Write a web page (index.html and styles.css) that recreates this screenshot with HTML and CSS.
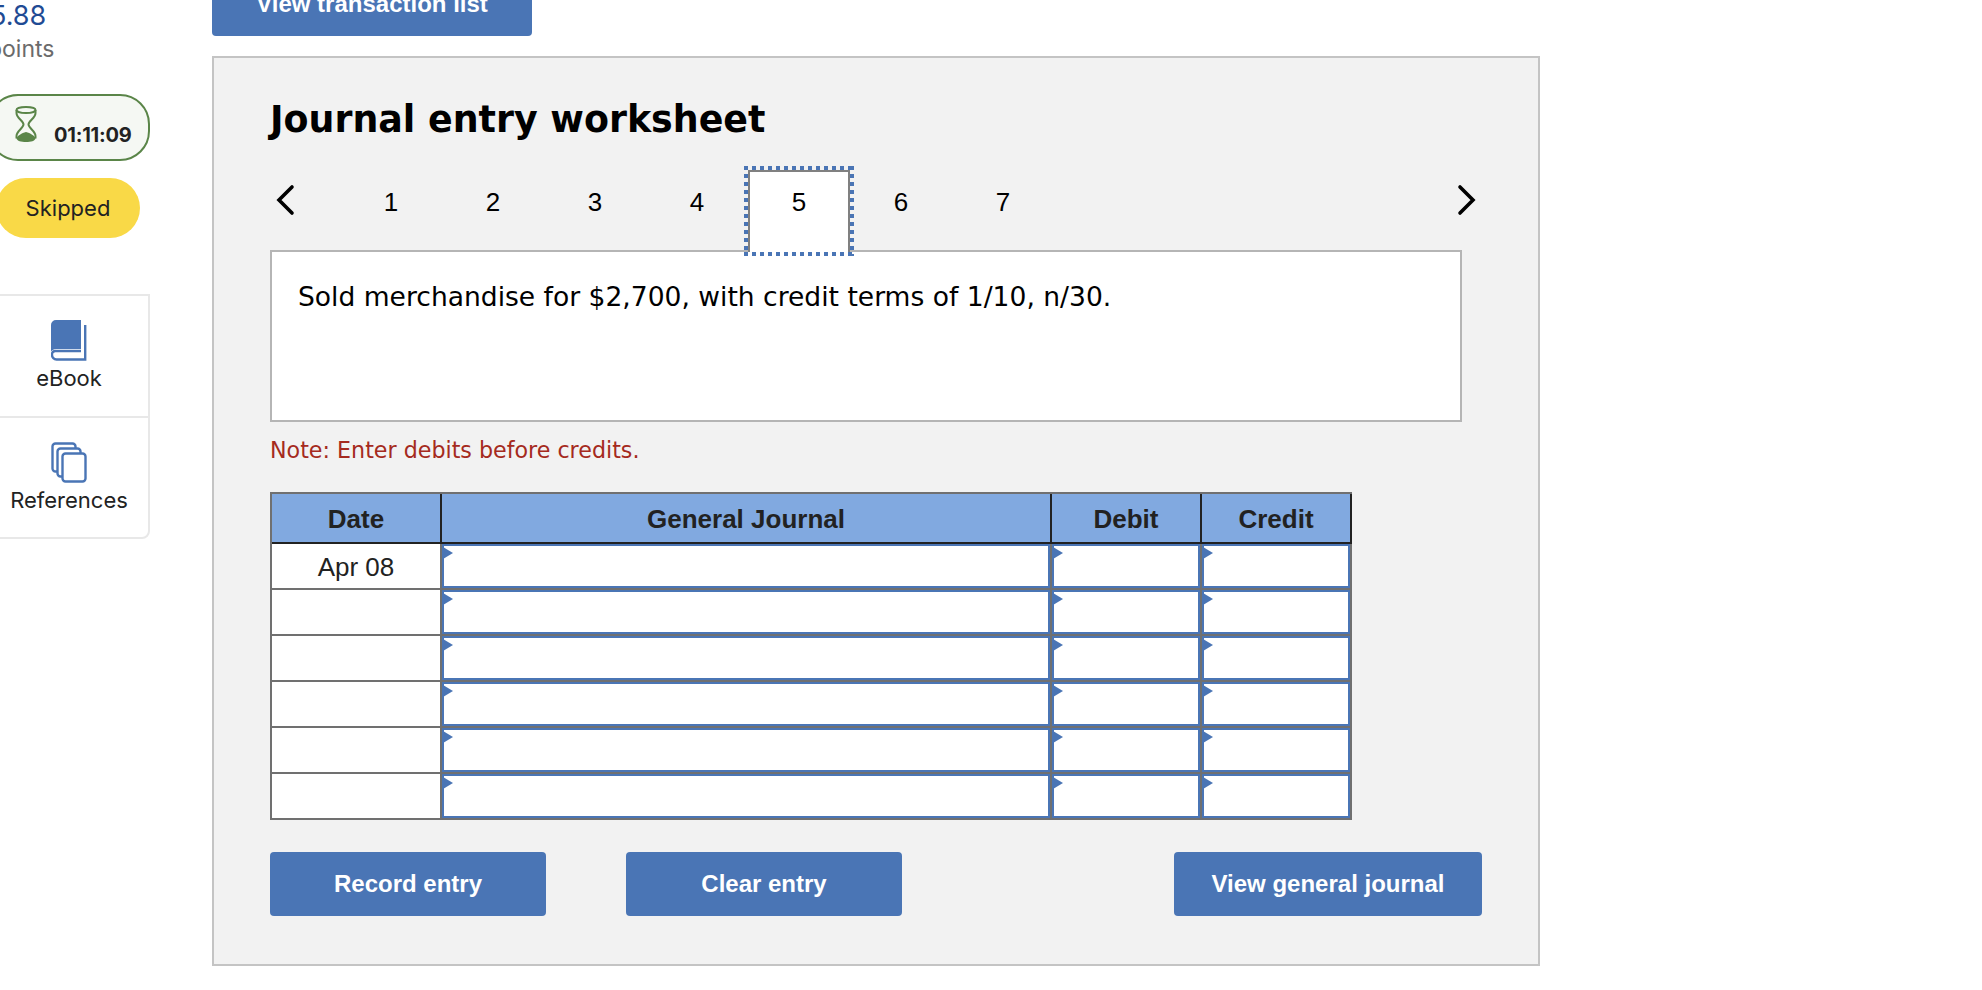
FILE: index.html
```html
<!DOCTYPE html>
<html lang="en">
<head>
<meta charset="utf-8">
<title>Journal entry worksheet</title>
<link rel="stylesheet" href="styles.css">
</head>
<body>
<div class="page">
  <aside class="sidebar">
    <div class="score">5.88</div>
    <div class="points">points</div>
    <div class="timer">
      <svg class="hourglass" width="22" height="37" viewBox="0 0 22 37">
        <ellipse cx="11" cy="4" rx="9.500" ry="3" fill="none" stroke="#5a8548" stroke-width="2"/>
        <path d="M1.500 4V7C1.500 12 8.500 15 8.500 18.500C8.500 22 1.500 25 1.500 30V32.500M20.500 4V7C20.500 12 13.500 15 13.500 18.500C13.500 22 20.500 25 20.500 30V32.500" fill="none" stroke="#5a8548" stroke-width="2"/>
        <path d="M11 26C7 27 2 30 1.500 32.500C2 35 6 36 11 36C16 36 20 35 20.500 32.500C20 30 15 27 11 26Z" fill="#5a8548"/>
      </svg>
      <span class="timer-text">01:11:09</span>
    </div>
    <div class="status">Skipped</div>
    <div class="tools">
      <div class="tool tool-first">
        <svg class="tool-icon" width="36" height="41" viewBox="0 0 36 41">
          <path d="M5 0H30V29H5C2.800 29 1.200 30 0 31.500V5A5 5 0 0 1 5 0Z" fill="#4a75b5"/>
          <path d="M34.200 5V39.500H5.500A4.500 4.500 0 0 1 1 35V33.500A3.500 3.500 0 0 1 4.500 31H30" fill="none" stroke="#4a75b5" stroke-width="2.400"/>
        </svg>
        <span class="tool-label">eBook</span>
      </div>
      <div class="tool">
        <svg class="tool-icon" width="36" height="41" viewBox="0 0 36 41">
          <rect x="1.500" y="1.500" width="23" height="28" rx="3" fill="#fff" stroke="#4a75b5" stroke-width="2.400"/>
          <rect x="6.500" y="6.500" width="23" height="28" rx="3" fill="#fff" stroke="#4a75b5" stroke-width="2.400"/>
          <rect x="11.500" y="11.500" width="23" height="28" rx="3" fill="#fff" stroke="#4a75b5" stroke-width="2.400"/>
        </svg>
        <span class="tool-label">References</span>
      </div>
    </div>
  </aside>

  <main class="main">
    <button class="btn btn-top">View transaction list</button>
    <section class="panel">
      <h1 class="title">Journal entry worksheet</h1>
      <nav class="steps">
        <svg class="chev chev-left" width="22" height="32" viewBox="0 0 22 32">
          <path d="M18 3L5 16L18 29" fill="none" stroke="#000" stroke-width="3.600" stroke-linecap="round" stroke-linejoin="miter"/>
        </svg>
        <div class="tabs">
          <span class="tab">1</span>
          <span class="tab">2</span>
          <span class="tab">3</span>
          <span class="tab">4</span>
          <span class="tab tab-active">5</span>
          <span class="tab">6</span>
          <span class="tab">7</span>
        </div>
        <svg class="chev chev-right" width="22" height="32" viewBox="0 0 22 32">
          <path d="M4 3L17 16L4 29" fill="none" stroke="#000" stroke-width="3.600" stroke-linecap="round" stroke-linejoin="miter"/>
        </svg>
      </nav>
      <div class="desc">Sold merchandise for $2,700, with credit terms of 1/10, n/30.</div>
      <p class="note">Note: Enter debits before credits.</p>
      <table class="journal">
        <thead>
          <tr>
            <th class="col-date">Date</th>
            <th class="col-account">General Journal</th>
            <th class="col-amount">Debit</th>
            <th class="col-amount">Credit</th>
          </tr>
        </thead>
        <tbody>
          <tr><td class="date">Apr 08</td><td><div class="field"></div></td><td><div class="field"></div></td><td><div class="field"></div></td></tr>
          <tr><td class="date"></td><td><div class="field"></div></td><td><div class="field"></div></td><td><div class="field"></div></td></tr>
          <tr><td class="date"></td><td><div class="field"></div></td><td><div class="field"></div></td><td><div class="field"></div></td></tr>
          <tr><td class="date"></td><td><div class="field"></div></td><td><div class="field"></div></td><td><div class="field"></div></td></tr>
          <tr><td class="date"></td><td><div class="field"></div></td><td><div class="field"></div></td><td><div class="field"></div></td></tr>
          <tr><td class="date"></td><td><div class="field"></div></td><td><div class="field"></div></td><td><div class="field"></div></td></tr>
        </tbody>
      </table>
      <div class="actions">
        <button class="btn btn-record">Record entry</button>
        <button class="btn btn-clear">Clear entry</button>
        <button class="btn btn-view">View general journal</button>
      </div>
    </section>
  </main>
</div>
</body>
</html>
```
FILE: styles.css
```css
* { box-sizing: border-box; }
html, body { margin: 0; padding: 0; background: #fff; }
body { height: 990px; overflow: hidden; font-family: "Liberation Sans", Arial, sans-serif; color: #000; }
.page { display: flex; align-items: flex-start; }

.sidebar { width: 162px; margin-left: -12px; flex: none; font-family: Inter, Lato, sans-serif; }
.score { font-size: 27px; line-height: 32px; color: #1f4b94; padding-left: 2px; }
.points { font-size: 23px; line-height: 30px; margin-top: 2px; color: #6b6b6b; padding-left: 0; }
.timer { height: 67px; margin-top: 30px; border: 2px solid #5a8548; border-radius: 30px; background: #f5f8f3; display: flex; align-items: flex-start; padding: 10px 0 0 25px; }
.hourglass { flex: none; }
.timer-text { font-size: 20px; font-weight: 700; line-height: 24px; letter-spacing: -0.2px; color: #222; margin: 17px 0 0 17px; }
.status { width: 144px; height: 60px; margin: 17px 0 0 8px; border-radius: 30px; background: #f9d947; color: #222; font-size: 22px; line-height: 60px; text-align: center; }
.tools { margin-top: 56px; width: 162px; height: 245px; border: 2px solid #e8e8e8; border-radius: 0 0 8px 0; display: flex; flex-direction: column; }
.tool { height: 121px; display: flex; flex-direction: column; align-items: center; padding-top: 24px; }
.tool-first { height: 123px; border-bottom: 2px solid #e8e8e8; }
.tool-icon { display: block; flex: none; }
.tool-label { font-size: 22px; line-height: 26px; color: #222; margin-top: 4px; }

.main { width: 1328px; margin-left: 62px; margin-top: -28px; flex: none; }
.btn { display: block; border: 0; border-radius: 4px; background: #4a75b5; color: #fff; font: 700 24px/1 "Liberation Sans", Arial, sans-serif; height: 64px; padding: 0; text-align: center; }
.btn-top { width: 320px; }
.panel { margin-top: 20px; height: 910px; background: #f2f2f2; border: 2px solid #c4c4c4; padding: 0 56px; }
.title { margin: 40px 0 0; font: 700 36.400px/44px "DejaVu Sans", Verdana, sans-serif; color: #000; }
.steps { display: flex; align-items: flex-start; height: 86px; margin-top: 28px; width: 1212px; position: relative; }
.chev { flex: none; margin-top: 14px; }
.chev-left { margin-left: 4px; }
.chev-right { margin-left: auto; margin-right: 4px; }
.tabs { display: flex; margin-left: 44px; }
.tab { width: 102px; height: 82px; padding-top: 17px; font-size: 26px; line-height: 30px; text-align: center; color: #000; position: relative; }
.tab-active { background: #fff; border: 2px solid #808080; border-bottom: 0; padding-top: 15px; z-index: 2; }
.tab-active::after {
  content: "";
  position: absolute;
  left: -6px; top: -6px; width: 110px; height: 90px;
  background:
    linear-gradient(90deg, #4a75b5 50%, transparent 50%) left top / 8px 4px repeat-x,
    linear-gradient(90deg, #4a75b5 50%, transparent 50%) left bottom / 8px 4px repeat-x,
    linear-gradient(180deg, #4a75b5 50%, transparent 50%) left top / 4px 8px repeat-y,
    linear-gradient(180deg, #4a75b5 50%, transparent 50%) right top / 4px 8px repeat-y;
}
.desc { width: 1192px; height: 172px; margin-top: -6px; background: #fff; border: 2px solid #b5b5b5; padding: 27px 26px; font: 26.550px/36px "DejaVu Sans", Verdana, sans-serif; color: #000; position: relative; z-index: 1; }
.note { margin: 15px 0 0; font: 22.200px/26px "DejaVu Sans", Verdana, sans-serif; color: #a52a20; }

.journal { margin-top: 29px; border-collapse: separate; border-spacing: 0; table-layout: fixed; width: 1082px; border-top: 2px solid #707070; border-left: 2px solid #707070; background: #fff; }
.journal th { height: 50px; padding: 1px 0 0; background: #81a9e0; border-right: 2px solid #222; border-bottom: 2px solid #222; font-size: 26px; line-height: 30px; color: #222; }
.journal td { height: 46px; padding: 0; border-right: 2px solid #707070; border-bottom: 2px solid #707070; }
.col-date { width: 170px; }
.col-account { width: 610px; }
.col-amount { width: 150px; }
.journal td.date { padding-top: 1px; text-align: center; font-size: 26px; line-height: 30px; color: #222; }
.field { height: 44px; border: 2px solid #4a75b5; background: #fff; position: relative; }
.field::before { content: ""; position: absolute; left: -1px; top: 1px; border-left: 10px solid #4a75b5; border-top: 6.500px solid transparent; border-bottom: 6.500px solid transparent; }

.actions { display: flex; margin-top: 32px; }
.btn-record { width: 276px; }
.btn-clear { width: 276px; margin-left: 80px; }
.btn-view { width: 308px; margin-left: 272px; }
```
